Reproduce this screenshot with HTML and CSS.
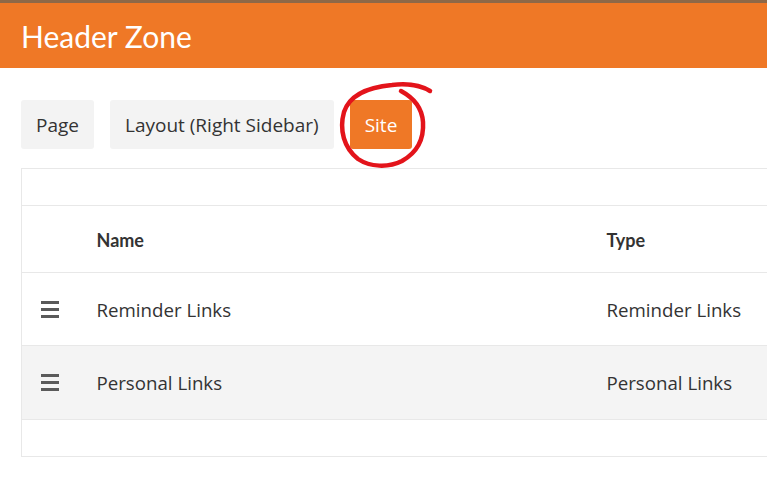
FILE: index.html
```html
<!DOCTYPE html>
<html lang="en">
<head>
    <meta charset="UTF-8">
    <meta name="viewport" content="width=device-width, initial-scale=1.0">
    <title>Header Zone</title>
    <link rel="stylesheet" href="styles.css">
</head>
<body>
    <div class="zone-header">
        <h1>Header Zone</h1>
    </div>

    <div class="content">
        <div class="tabs">
            <button class="tab">Page</button>
            <button class="tab">Layout (Right Sidebar)</button>
            <button class="tab active">Site</button>
            <!-- hand-drawn mark around the active tab -->
            <svg class="scribble" width="110" height="100" viewBox="0 0 110 100">
                <path d="M100,13 C92,8 78,5 62,7 C40,9 20,16 14,34 C9,52 14,70 28,81 C40,89 58,90 72,83 C88,74 94,60 93,44 C92,30 84,20 71,13"/>
            </svg>
        </div>

        <table class="widgets">
            <colgroup>
                <col class="col-handle">
                <col class="col-name">
                <col class="col-type">
            </colgroup>
            <tbody>
                <tr class="spacer"><td colspan="3"></td></tr>
                <tr class="head">
                    <td></td>
                    <th>Name</th>
                    <th>Type</th>
                </tr>
                <tr>
                    <td class="handle"><span class="bars"><i></i><i></i><i></i></span></td>
                    <td>Reminder Links</td>
                    <td>Reminder Links</td>
                </tr>
                <tr class="alt">
                    <td class="handle"><span class="bars"><i></i><i></i><i></i></span></td>
                    <td>Personal Links</td>
                    <td>Personal Links</td>
                </tr>
                <tr class="spacer"><td colspan="3"></td></tr>
            </tbody>
        </table>
    </div>
</body>
</html>
```

FILE: styles.css
```css
body {
    margin: 0;
    background-color: #fff;
    font-family: "Open Sans", "Noto Sans", sans-serif;
    color: #333;
    overflow: hidden;
}
.zone-header {
    border-top: 3px solid #8e6847;
    background-color: #ef7826;
    height: 65px;
    padding-left: 21px;
    display: flex;
    align-items: center;
}
.zone-header h1 {
    margin: 0;
    font-family: Lato, sans-serif;
    font-weight: 400;
    font-size: 30px;
    color: #fff;
}
.content {
    padding: 32px 0 0 21px;
}
.tabs {
    position: relative;
    display: flex;
    gap: 16px;
}
.tab {
    height: 49px;
    padding: 0 15px;
    border: none;
    border-radius: 3px;
    background-color: #f3f3f3;
    font-family: "Open Sans", "Noto Sans", sans-serif;
    font-size: 19px;
    color: #333;
}
.tab.active {
    background-color: #ef7826;
    color: #fff;
}
.scribble {
    position: absolute;
    left: 309px;
    top: -22px;
    fill: none;
    stroke: #e3141b;
    stroke-width: 4.5;
    stroke-linecap: round;
}
.widgets {
    margin-top: 19px;
    width: 800px;
    border-collapse: collapse;
    border-left: 1px solid #e8e8e8;
    font-size: 18.7px;
}
.col-handle { width: 75px; }
.col-name { width: 510px; }
.widgets tr {
    height: 73px;
    border-top: 1px solid #e8e8e8;
}
.widgets tr:last-child {
    border-bottom: 1px solid #e8e8e8;
}
.widgets td, .widgets th {
    padding: 0;
    text-align: left;
    vertical-align: middle;
}
.widgets th {
    padding-top: 2px;
    font-family: Lato, sans-serif;
    font-weight: 700;
    font-size: 18px;
    color: #333;
}
.widgets tr.spacer { height: 37px; }
.widgets tr.head { height: 67px; }
.widgets tr.alt {
    height: 74px;
    background-color: #f4f4f4;
}
.widgets td.handle {
    padding-left: 19px;
}
.bars {
    display: flex;
    flex-direction: column;
    gap: 4px;
    width: 18px;
}
.bars i {
    height: 3px;
    background-color: #5a5a5a;
}
```
